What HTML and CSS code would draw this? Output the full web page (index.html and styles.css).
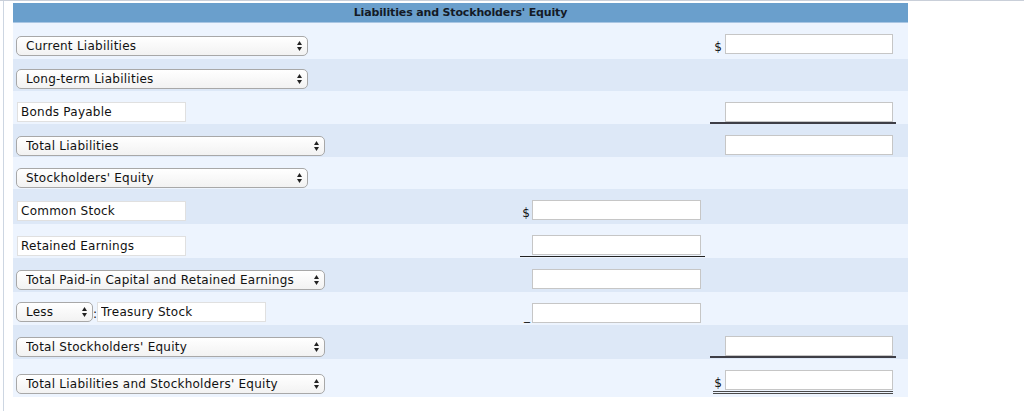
FILE: index.html
```html
<!DOCTYPE html>
<html>
<head>
<meta charset="utf-8">
<title>Liabilities and Stockholders' Equity</title>
<link rel="stylesheet" href="styles.css">
</head>
<body>
<div class="frame">
  <div class="sheet">
    <div class="head">Liabilities and Stockholders' Equity</div>

    <div class="row light h36 first">
      <div class="lab"><span class="sel w292"><select><option>Current Liabilities</option></select><svg class="arr" width="5" height="10" viewBox="0 0 5 10"><path d="M2.5 0L5 4H0Z M0 6H5L2.5 10Z"/></svg></span></div>
      <div class="amt mid"></div>
      <div class="amt right"><span class="pair"><span class="cur">$</span><input class="num" type="text"></span></div>
    </div>

    <div class="row dark h32">
      <div class="lab"><span class="sel w292"><select><option>Long-term Liabilities</option></select><svg class="arr" width="5" height="10" viewBox="0 0 5 10"><path d="M2.5 0L5 4H0Z M0 6H5L2.5 10Z"/></svg></span></div>
      <div class="amt mid"></div>
      <div class="amt right"></div>
    </div>

    <div class="row light h33">
      <div class="lab dn1"><input class="txt" type="text" value="Bonds Payable"></div>
      <div class="amt mid"></div>
      <div class="amt right under"><span class="pair"><input class="num" type="text"></span></div>
    </div>

    <div class="row dark h33">
      <div class="lab dn2"><span class="sel w309"><select><option>Total Liabilities</option></select><svg class="arr" width="5" height="10" viewBox="0 0 5 10"><path d="M2.5 0L5 4H0Z M0 6H5L2.5 10Z"/></svg></span></div>
      <div class="amt mid"></div>
      <div class="amt right"><span class="pair"><input class="num" type="text"></span></div>
    </div>

    <div class="row light h32">
      <div class="lab dn1"><span class="sel w292"><select><option>Stockholders' Equity</option></select><svg class="arr" width="5" height="10" viewBox="0 0 5 10"><path d="M2.5 0L5 4H0Z M0 6H5L2.5 10Z"/></svg></span></div>
      <div class="amt mid"></div>
      <div class="amt right"></div>
    </div>

    <div class="row dark h35">
      <div class="lab dn2"><input class="txt" type="text" value="Common Stock"></div>
      <div class="amt mid"><span class="pair"><span class="cur">$</span><input class="num mnum" type="text"></span></div>
      <div class="amt right"></div>
    </div>

    <div class="row light h34">
      <div class="lab dn2"><input class="txt" type="text" value="Retained Earnings"></div>
      <div class="amt mid under"><span class="pair"><input class="num mnum" type="text"></span></div>
      <div class="amt right"></div>
    </div>

    <div class="row dark h34">
      <div class="lab dn2"><span class="sel w309"><select><option>Total Paid-in Capital and Retained Earnings</option></select><svg class="arr" width="5" height="10" viewBox="0 0 5 10"><path d="M2.5 0L5 4H0Z M0 6H5L2.5 10Z"/></svg></span></div>
      <div class="amt mid"><span class="pair"><input class="num mnum" type="text"></span></div>
      <div class="amt right"></div>
    </div>

    <div class="row light h33">
      <div class="lab inline"><span class="sel w77"><select><option>Less</option></select><svg class="arr" width="5" height="10" viewBox="0 0 5 10"><path d="M2.5 0L5 4H0Z M0 6H5L2.5 10Z"/></svg></span><span class="colon">:</span><input class="txt" type="text" value="Treasury Stock"></div>
      <div class="amt mid"><span class="pair"><span class="cur">_</span><input class="num mnum" type="text"></span></div>
      <div class="amt right"></div>
    </div>

    <div class="row dark h34">
      <div class="lab dn2"><span class="sel w309"><select><option>Total Stockholders' Equity</option></select><svg class="arr" width="5" height="10" viewBox="0 0 5 10"><path d="M2.5 0L5 4H0Z M0 6H5L2.5 10Z"/></svg></span></div>
      <div class="amt mid"></div>
      <div class="amt right under"><span class="pair"><input class="num" type="text"></span></div>
    </div>

    <div class="row light h38 last">
      <div class="lab dn5"><span class="sel w309"><select><option>Total Liabilities and Stockholders' Equity</option></select><svg class="arr" width="5" height="10" viewBox="0 0 5 10"><path d="M2.5 0L5 4H0Z M0 6H5L2.5 10Z"/></svg></span></div>
      <div class="amt mid"></div>
      <div class="amt right"><span class="pair double"><span class="cur">$</span><input class="num" type="text"></span></div>
    </div>
  </div>
</div>
</body>
</html>
```

FILE: styles.css
```css
html, body {
  margin: 0;
  padding: 0;
  background: #ffffff;
}

body {
  font-family: "DejaVu Sans", Verdana, sans-serif;
  font-size: 12px;
  color: #111111;
}

.frame {
  border-top: 1px solid #c9cfd9;
  min-height: 412px;
  box-sizing: border-box;
}

.sheet {
  margin-left: 3px;
  border-left: 1px solid #cdd6e2;
  padding-left: 9px;
  padding-top: 2px;
  min-height: 410px;
  box-sizing: border-box;
}

.head,
.row {
  width: 895px;
}

.head {
  height: 19px;
  background: #6a9fcc;
  border-bottom: 1px solid #a9c6e3;
  font-weight: bold;
  font-size: 11px;
  letter-spacing: -0.15px;
  line-height: 19px;
  text-align: center;
  color: #141a26;
}

.row {
  display: grid;
  grid-template-columns: 502px 185px 186px;
  column-gap: 5px;
  align-items: start;
  padding-top: 10px;
  box-sizing: border-box;
}

.light { background: #edf4fe; }
.dark { background: #dde8f7; }

.h32 { height: 32px; }
.h33 { height: 33px; }
.h34 { height: 34px; }
.h35 { height: 35px; }
.h36 { height: 36px; }
.h38 { height: 38px; }

.first .sel { margin-top: 3px; }

.lab {
  padding-left: 3px;
  display: flex;
  align-items: center;
}

.dn1 { margin-top: 1px; }
.dn2 { margin-top: 2px; }
.dn5 { margin-top: 5px; }

/* select boxes */
.sel {
  position: relative;
  display: inline-block;
  height: 20px;
}

.sel select {
  -webkit-appearance: none;
  appearance: none;
  display: block;
  width: 100%;
  height: 20px;
  margin: 0;
  padding: 0 0 0 9px;
  border: 1px solid #a8a8a8;
  border-radius: 5px;
  background: linear-gradient(#ffffff, #f2f2f2);
  font-family: "DejaVu Sans", Verdana, sans-serif;
  font-size: 12px;
  letter-spacing: 0.25px;
  color: #111111;
  line-height: 18px;
  box-sizing: border-box;
}

.sel .arr {
  position: absolute;
  right: 6px;
  top: 5px;
  fill: #222222;
}

.w292 { width: 292px; }
.w309 { width: 309px; }
.w77 { width: 77px; }

.colon {
  font-size: 12px;
  line-height: 20px;
  position: relative;
  top: 2px;
  margin-left: 0;
  margin-right: 0;
}

.txt {
  display: block;
  width: 169px;
  height: 20px;
  margin: 0 0 0 1px;
  padding: 0 3px;
  border: 1px solid #e0e0e0;
  background: #ffffff;
  font-family: "DejaVu Sans", Verdana, sans-serif;
  font-size: 12px;
  letter-spacing: 0.25px;
  color: #111111;
  box-sizing: border-box;
  outline: none;
}

.inline .txt { margin-left: 0; }

/* amount cells */
.amt {
  display: flex;
  justify-content: flex-end;
  align-items: flex-end;
  margin-top: 1px;
  padding-bottom: 1px;
  border-bottom: 1px solid transparent;
  min-height: 20px;
}

.mid { padding-right: 4px; }
.right { padding-right: 3px; }

.under { border-bottom-color: #222222; }
.right.under { border-bottom: 2px solid #3e3e46; padding-bottom: 0; }

.pair {
  display: flex;
  align-items: flex-end;
}

.double {
  border-bottom: 3px double #4a4a4a;
  padding-bottom: 1px;
  padding-left: 1px;
}

.cur {
  font-size: 12px;
  line-height: 14px;
  color: #111111;
  margin-right: 3px;
}

.mid .cur { margin-right: 2px; }

.num {
  display: block;
  width: 168px;
  height: 20px;
  margin: 0;
  padding: 0 3px;
  border: 1px solid #c6c6c6;
  background: #ffffff;
  box-sizing: border-box;
  outline: none;
}

.mnum { width: 169px; }
```
